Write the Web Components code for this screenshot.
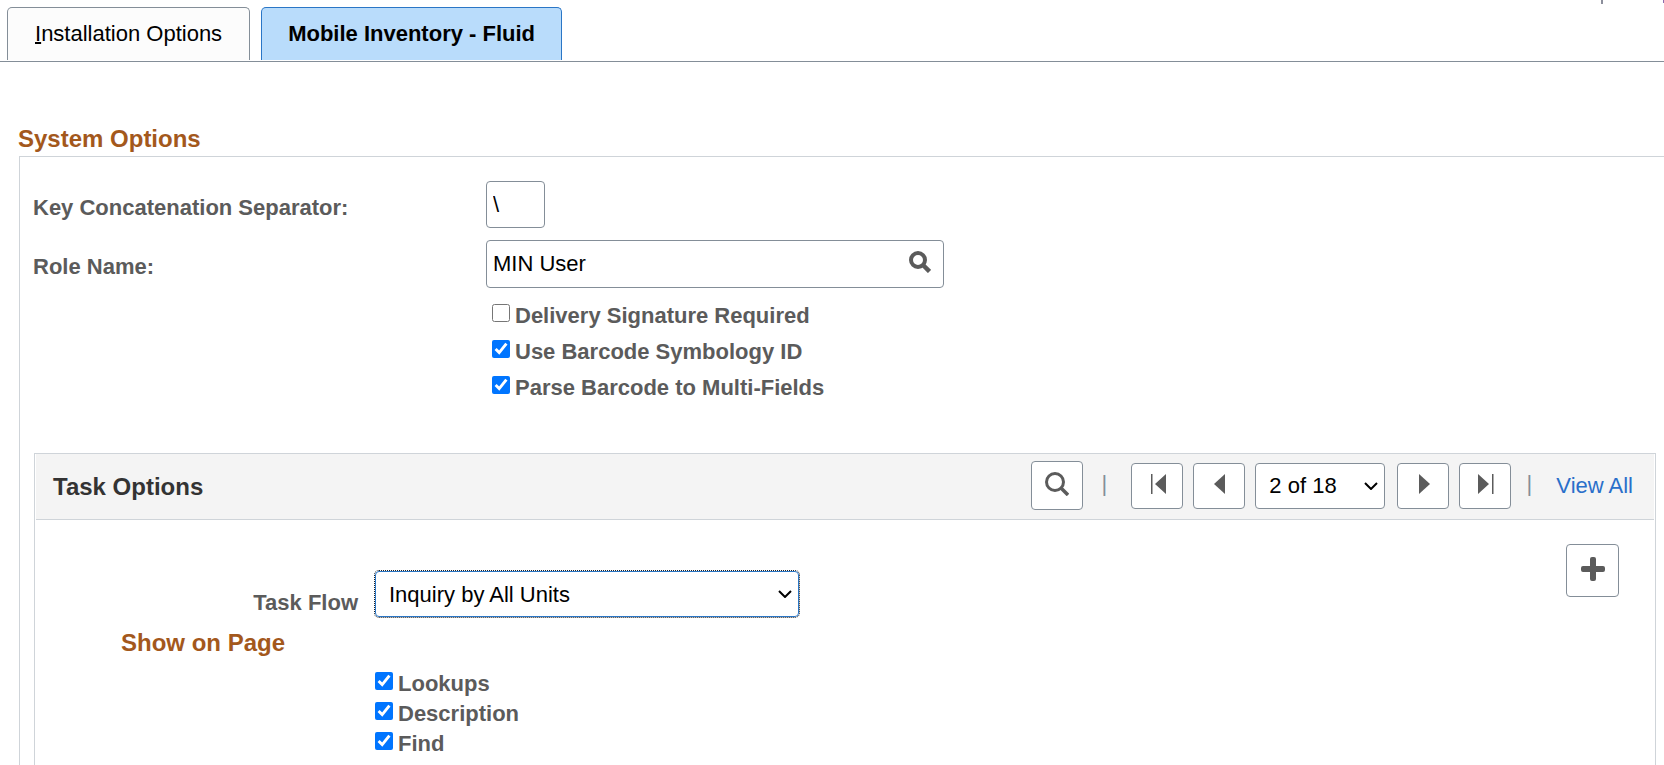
<!DOCTYPE html>
<html lang="en">
<head>
<meta charset="utf-8">
<title>Installation Options</title>
<style>
  html, body { margin: 0; height: 100%; }
  body {
    background: #fff;
    color: #000;
    font-family: "Liberation Sans", Arial, Helvetica, sans-serif;
    font-size: 22px;
    line-height: 28px;
    overflow: hidden;
    --line: #cfd4d9;
    --edge: #848e98;
    --label: #5b5b5b;
    --title: #a3581c;
    --link: #2a6fca;
  }
</style>
</head>
<body>
<options-page></options-page>

<script>
const define = (name, html, setup) => {
  const template = document.createElement("template");
  template.innerHTML = `<style>* { box-sizing: border-box; }</style>${html}`;
  customElements.define(name, class extends HTMLElement {
    constructor() {
      super();
      this.attachShadow({ mode: "open" }).append(template.content.cloneNode(true));
    }
    connectedCallback() {
      if (setup) setup(this, this.shadowRoot);
    }
  });
};

const icons = {
  "search-bold": [22, `<circle cx="9" cy="9" r="7" fill="none" stroke="#5b5b5b" stroke-width="4"/><path d="M14 14l6.500 6.500" stroke="#5b5b5b" stroke-width="4.500"/>`],
  search: [24, `<circle cx="10" cy="10" r="8.500" fill="none" stroke="#5b5b5b" stroke-width="3"/><path d="M16 16l7 7" stroke="#5b5b5b" stroke-width="3.500"/>`],
  first: [24, `<path d="M6 2h1.500v20H6zM21 2v20L10 12z" fill="#5b5b5b"/>`],
  previous: [24, `<path d="M18 2v20L7 12z" fill="#5b5b5b"/>`],
  next: [24, `<path d="M8 2v20l11-10z" fill="#5b5b5b"/>`],
  last: [24, `<path d="M5 2v20l11-10zM19 2h1.500v20H19z" fill="#5b5b5b"/>`],
  add: [24, `<path d="M11 0h2q2 0 2 2v7h7q2 0 2 2v2q0 2-2 2h-7v7q0 2-2 2h-2q-2 0-2-2v-7H2q-2 0-2-2v-2q0-2 2-2h7V2q0-2 2-2z" fill="#5b5b5b"/>`]
};
const icon = name => `<svg width="${icons[name][0]}" height="${icons[name][0]}" viewBox="0 0 ${icons[name][0]} ${icons[name][0]}" aria-hidden="true">${icons[name][1]}</svg>`;

define("page-tab", `
  <style>
    :host { display: block; }
    button {
      display: block; height: 53px; padding: 0 27px;
      border: 1px solid var(--edge); border-bottom: 0; border-radius: 5px 5px 0 0;
      background: #fcfcfc; color: #000; font: inherit;
    }
    :host([selected]) button { padding: 0 26px; background: #b9dcfb; border-color: #2a76c6; font-weight: bold; }
    ::slotted(u) { text-decoration-thickness: 2px; }
  </style>
  <button type="button" role="tab"><slot></slot></button>`,
  (host, root) => root.querySelector("button").setAttribute("aria-selected", host.hasAttribute("selected")));

define("tab-bar", `
  <style>
    :host { display: flex; gap: 11px; padding: 3px 7px 1px; border-bottom: 1px solid var(--edge); }
  </style>
  <slot></slot>`);

define("toolbar-edge", `
  <style>
    :host { display: flex; justify-content: flex-end; gap: 60px; height: 4px; }
    i { width: 2px; height: 4px; background: #8c8f9c; }
    i + i { width: 1px; height: 3px; background: #8b6cae; }
  </style>
  <i></i><i></i>`);

define("section-title", `
  <style>
    :host { display: block; }
    h2 { margin: 0; font-size: 24px; line-height: 28px; color: var(--title-color, var(--title)); }
  </style>
  <h2><slot></slot></h2>`);

define("text-field", `
  <style>
    :host { display: grid; grid-template-columns: 453px 1fr; align-items: center; }
    label { padding-top: 6px; font-weight: bold; color: var(--label); }
    .box {
      display: flex; align-items: center; width: 458px; height: 48px; padding-right: 12px;
      border: 1px solid var(--edge); border-radius: 4px; background: #fff;
    }
    :host([short]) .box { width: 59px; height: 47px; padding: 0; }
    input {
      flex: 1; min-width: 0; padding: 0 6px; border: 0; outline: 0; background: none;
      color: #000; font: inherit;
    }
    button { display: flex; padding: 0 0 4px; border: 0; background: none; }
  </style>
  <label for="f"></label>
  <div class="box"><input id="f" type="text"></div>`,
  (host, root) => {
    root.querySelector("label").textContent = host.getAttribute("label");
    root.querySelector("input").value = host.getAttribute("value");
    if (host.hasAttribute("lookup"))
      root.querySelector(".box").insertAdjacentHTML("beforeend", `<button type="button" aria-label="Look up">${icon("search-bold")}</button>`);
  });

define("check-option", `
  <style>
    :host { display: flex; align-items: center; gap: 5px; height: var(--pitch, 36px); }
    input { width: 18px; height: 18px; margin: 0; }
    label { padding-top: 6px; font-weight: bold; color: var(--label); }
  </style>
  <input id="c" type="checkbox"><label for="c"><slot></slot></label>`,
  (host, root) => { root.querySelector("input").checked = host.hasAttribute("checked"); });

define("icon-button", `
  <style>
    :host { display: block; }
    button {
      display: flex; align-items: center; justify-content: center;
      width: var(--width, 52px); height: var(--height, 46px); padding: 0 0 4px;
      border: 1px solid var(--edge); border-radius: 4px; background: #fff;
    }
  </style>
  <button type="button"></button>`,
  (host, root) => {
    const button = root.querySelector("button");
    button.setAttribute("aria-label", host.getAttribute("label"));
    button.innerHTML = icon(host.getAttribute("icon"));
  });

define("drop-down", `
  <style>
    :host { display: grid; align-items: center; }
    select, svg { grid-area: 1 / 1; }
    select {
      appearance: none; width: 100%; height: 46px; padding: 0 34px 0 13px;
      border: 1px solid var(--edge); border-radius: 4px; background: #fff; color: #000; font: inherit;
    }
    svg { justify-self: end; margin-right: 7px; pointer-events: none; }
  </style>
  <select><option></option></select>
  <svg width="14" height="8" viewBox="0 0 14 8" aria-hidden="true"><path d="M1 1l6 6 6-6" fill="none" stroke="#000" stroke-width="2"/></svg>`,
  (host, root) => {
    root.querySelector("option").textContent = host.getAttribute("value");
    root.querySelector("select").setAttribute("aria-label", host.getAttribute("label"));
  });

define("row-navigator", `
  <style>
    :host { display: flex; align-items: center; gap: 10px; padding-bottom: 2px; }
    .find { --height: 49px; }
    .bar { width: 6px; padding-bottom: 4px; color: #848e98; text-align: center; }
    .bar.a { margin: 0 14px 0 8px; }
    .bar.b { margin: 0 14px 0 5px; }
    drop-down { width: 130px; margin-right: 2px; }
    a { color: var(--link); text-decoration: none; }
  </style>
  <icon-button class="find" icon="search" label="Find"></icon-button>
  <span class="bar a">|</span>
  <icon-button icon="first" label="First row"></icon-button>
  <icon-button icon="previous" label="Previous row"></icon-button>
  <drop-down label="Row" value="2 of 18"></drop-down>
  <icon-button icon="next" label="Next row"></icon-button>
  <icon-button icon="last" label="Last row"></icon-button>
  <span class="bar b">|</span>
  <a href="#all">View All</a>`);

define("task-flow", `
  <style>
    :host { display: grid; grid-template-columns: 322px 424px; column-gap: 17px; align-items: end; }
    label { text-align: right; font-weight: bold; color: var(--label); }
    .wrap { display: grid; align-items: center; }
    select, svg { grid-area: 1 / 1; }
    select {
      appearance: none; width: 100%; height: 46px; padding: 1px 34px 0 13px;
      border: 1px solid #2a76c6; border-radius: 4px; outline: 1px dotted #222;
      background: #fff; color: #000; font: inherit;
    }
    svg { justify-self: end; margin-right: 7px; pointer-events: none; }
  </style>
  <label for="flow">Task Flow</label>
  <div class="wrap">
    <select id="flow"><option>Inquiry by All Units</option></select>
    <svg width="14" height="8" viewBox="0 0 14 8" aria-hidden="true"><path d="M1 1l6 6 6-6" fill="none" stroke="#000" stroke-width="2"/></svg>
  </div>`);

define("task-options", `
  <style>
    :host { display: flex; flex-direction: column; border: 1px solid var(--line); padding: 0 1px; }
    header {
      display: flex; align-items: center; justify-content: space-between; height: 66px; padding: 0 21px 0 17px;
      background: #f4f4f4; border-bottom: 1px solid var(--line); --title-color: #333;
    }
    .body { display: flex; justify-content: space-between; align-items: flex-start; padding-right: 35px; }
    .form { padding-top: 51px; }
    .show { margin: 12px 0 9px 85px; }
    .checks { margin-left: 339px; --pitch: 30px; }
    .add { margin-top: 24px; --width: 53px; --height: 53px; }
  </style>
  <header>
    <section-title>Task Options</section-title>
    <row-navigator></row-navigator>
  </header>
  <div class="body">
    <div class="form">
      <task-flow></task-flow>
      <section-title class="show">Show on Page</section-title>
      <div class="checks">
        <check-option checked>Lookups</check-option>
        <check-option checked>Description</check-option>
        <check-option checked>Find</check-option>
      </div>
    </div>
    <icon-button class="add" icon="add" label="Add row"></icon-button>
  </div>`);

define("system-options", `
  <style>
    :host { display: flex; flex-direction: column; }
    section-title { margin: 0 0 3px 18px; }
    .frame {
      flex: 1; display: flex; flex-direction: column; margin-left: 19px; padding: 24px 8px 0 13px;
      border: 1px solid var(--line); border-width: 1px 0 0 1px;
    }
    .fields { display: grid; gap: 12px; }
    .checks { margin: 7px 0 50px 459px; }
    task-options { flex: 1; margin-left: 1px; border-bottom: 0; }
  </style>
  <section-title>System Options</section-title>
  <div class="frame">
    <div class="fields">
      <text-field short label="Key Concatenation Separator:" value="\\"></text-field>
      <text-field lookup label="Role Name:" value="MIN User"></text-field>
    </div>
    <div class="checks">
      <check-option>Delivery Signature Required</check-option>
      <check-option checked>Use Barcode Symbology ID</check-option>
      <check-option checked>Parse Barcode to Multi-Fields</check-option>
    </div>
    <task-options></task-options>
  </div>`);

define("options-page", `
  <style>
    :host { display: flex; flex-direction: column; min-height: 100vh; }
    system-options { flex: 1; margin-top: 63px; }
  </style>
  <toolbar-edge></toolbar-edge>
  <tab-bar role="tablist">
    <page-tab><u>I</u>nstallation Options</page-tab>
    <page-tab selected>Mobile Inventory - Fluid</page-tab>
  </tab-bar>
  <system-options></system-options>`);
</script>
</body>
</html>
